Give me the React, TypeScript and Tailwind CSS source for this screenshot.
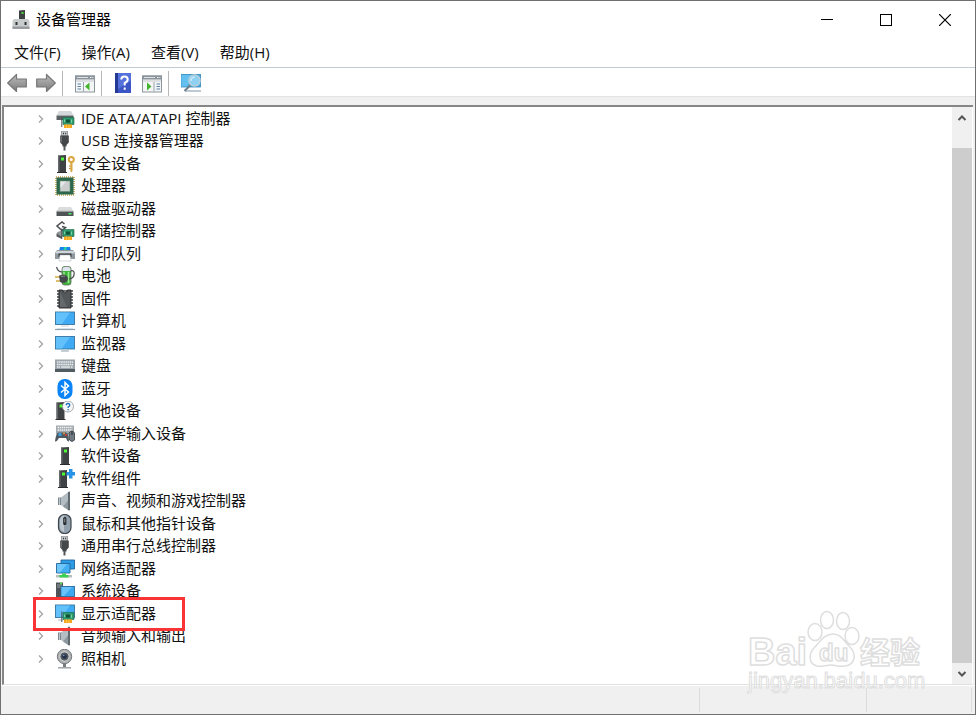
import type { ReactNode } from 'react'

const Svg = ({ children, size = 'size-5' }: { children: ReactNode; size?: string }) => (
  <svg viewBox="0 0 20 20" className={`${size} shrink-0`} aria-hidden="true">
    {children}
  </svg>
)

const Card = () => (
  <>
    <path d="M8 8.500H19V15.500H8Z" fill="#2f9a6c" stroke="#17694a" strokeWidth=".6" />
    <path d="M6.800 7.500V18" stroke="#4b5557" strokeWidth="1" />
    <rect x="11" y="10.500" width="4" height="3.200" fill="#12543a" />
    <path d="M16.500 10.500V14M9.500 10.500V13" stroke="#8edcb4" strokeWidth=".8" />
    <rect x="9" y="15.500" width="8" height="3.500" fill="#f5a81c" />
    <path d="M11.500 15.500V19M14 15.500V19" stroke="#ffd36b" strokeWidth=".6" />
  </>
)

const Tower = ({ x = 0 }: { x?: number }) => (
  <g transform={`translate(${x} 0)`}>
    <path d="M3 1.500L11 1V18H3Z" fill="#3f4244" />
    <path d="M3 1.500L4.500 1.400V18H3Z" fill="#66696b" />
    <path d="M2 18H12V19H2Z" fill="#2b2d2e" />
    <rect x="6" y="3.500" width="3" height="3" fill="#4ffa36" />
  </g>
)

const UsbPlug = () => (
  <>
    <path d="M6.500 0H12.500V5H6.500Z" fill="#c3c6c8" stroke="#7c7f81" strokeWidth=".7" />
    <path d="M8 1.800H9V3.200H8ZM10.200 1.800H11.200V3.200H10.200Z" fill="#333" />
    <path d="M5.200 4.500H13.800V11.500L11.500 14V15.500H7.500V14L5.200 11.500Z" fill="#454749" />
    <path d="M6.500 5.500V11.500" stroke="#6f7274" />
    <path d="M9.500 15V19.500" stroke="#55585a" strokeWidth="2" />
  </>
)

const Speaker = () => (
  <>
    <path d="M3 6.500H7V14H3Z" fill="#7d8990" />
    <path d="M6 6.500L14 .5V19.500L6 14Z" fill="#b4bdc3" />
    <path d="M11 12L14 8V19.500L8 15.500Z" fill="#8d979e" />
    <path d="M13 1L15 .5V19.500L13 19Z" fill="#5f6a71" />
    <path d="M4.500 6.500V14" stroke="#c0c7cb" />
  </>
)

const Screen = ({ stand }: { stand: ReactNode }) => (
  <>
    <rect x=".5" y="1" width="19" height="12.500" fill="#40abf4" stroke="#36759f" strokeWidth=".9" />
    <path d="M1 1.500H15L7 13H1Z" fill="#62c0fb" />
    {stand}
  </>
)

const devices: { name: string; icon: ReactNode; marked?: boolean }[] = [
  {
    name: 'IDE ATA/ATAPI 控制器',
    icon: (
      <>
        <path d="M4 2H16L18.500 6.500H1.500Z" fill="#d5d8da" />
        <path d="M1.500 6.500H18.500V11H1.500Z" fill="#5d6264" />
        <Card />
      </>
    ),
  },
  { name: 'USB 连接器管理器', icon: <UsbPlug /> },
  {
    name: '安全设备',
    icon: (
      <>
        <Tower />
        <circle cx="16.300" cy="5.500" r="2.500" fill="none" stroke="#dba540" strokeWidth="2" />
        <path d="M15.300 8H17.500V17L16.300 18.500L15.300 17Z" fill="#dba540" />
        <path d="M14 12H15.500M14 14.500H15.500" stroke="#b8832b" strokeWidth="1.200" />
      </>
    ),
  },
  {
    name: '处理器',
    icon: (
      <>
        <rect x="1" y="1" width="18" height="18" fill="none" stroke="#c69c44" strokeWidth="1.600" strokeDasharray="1 1" />
        <rect x="1.500" y="1.500" width="17" height="17" fill="#2d674b" />
        <rect x="5" y="5" width="10" height="10.500" fill="#cbcecc" stroke="#5f8f78" strokeWidth=".6" />
        <path d="M5.500 5.500H11L5.500 12Z" fill="#e6e8e7" />
      </>
    ),
  },
  {
    name: '磁盘驱动器',
    icon: (
      <>
        <path d="M4 8H16L18.500 12.500H1.500Z" fill="#d9dbdc" />
        <path d="M1.500 12.500H18.500V17H1.500Z" fill="#4e5355" />
        <path d="M1.500 12.300H18.500" stroke="#96999b" strokeWidth=".8" />
        <rect x="13.500" y="14" width="3" height="1.500" fill="#48ef70" />
      </>
    ),
  },
  {
    name: '存储控制器',
    icon: (
      <>
        <path d="M2.500 11L7 9.500L18 12V16H8L1.500 13Z" fill="#929799" />
        <path d="M1.500 12.500L7 15.500V18L1.500 15.500Z" fill="#565b5d" />
        <path d="M9.500 3L7 1L2 5L7 9.500L10.500 6.500L7 5.500" fill="none" stroke="#494c4e" strokeWidth="1.500" />
        <Card />
      </>
    ),
  },
  {
    name: '打印队列',
    icon: (
      <>
        <path d="M5 3H15L16 7H4Z" fill="#1585e8" />
        <path d="M9.500 3H12L11 6H8.500Z" fill="#27d3a1" />
        <path d="M2 6H18L20 9V15H0V9Z" fill="#8f989e" />
        <path d="M1.500 7H18.500L19.500 9.500H.5Z" fill="#cfd4d8" />
        <path d="M3.500 9.500H16.500V13H3.500Z" fill="#34393c" />
        <path d="M5 11H15L16 17H4Z" fill="#fff" stroke="#bac0c4" strokeWidth=".6" />
      </>
    ),
  },
  {
    name: '电池',
    icon: (
      <>
        <rect x="7" y=".5" width="9" height="18.500" rx="2.500" fill="#3db63a" stroke="#636866" strokeWidth=".8" />
        <path d="M7.500 3Q7.500 .8 11.500 .8T15.500 3V5H7.500Z" fill="#e0e4ee" />
        <path d="M9 6V9M13.500 6V17" stroke="#9ce88e" strokeWidth="1.500" />
        <path d="M1.500 1Q3 6 7 6M14 13Q20 12 19 6Q18 4 15.500 5" fill="none" stroke="#4a4d4f" strokeWidth="1.200" />
        <path d="M0 11H5M1 15H6" stroke="#d4aa42" strokeWidth="1.500" />
        <path d="M4 9.500L9 8.500Q13 9.500 13 13Q12 17 8 17L5 16Z" fill="#444749" />
        <path d="M6 10.500L10 10" stroke="#888" />
      </>
    ),
  },
  {
    name: '固件',
    icon: (
      <>
        <path d="M2 2H18M2 5H18M2 8H18M2 11H18M2 14H18M2 17H18" stroke="#424547" strokeWidth="1.500" />
        <path d="M4 1H7.500Q8.500 4 10 4T12.500 1H16V19H4Z" fill="#55585a" stroke="#222527" strokeWidth=".9" />
        <path d="M5 3L12 18H5Z" fill="#66696b" />
      </>
    ),
  },
  {
    name: '计算机',
    icon: (
      <Screen
        stand={
          <>
            <path d="M6 15H14" stroke="#cfd6db" />
            <path d="M0 18.500H20" stroke="#8ca2b3" strokeWidth="1.200" />
            <path d="M2 17.500H18" stroke="#d6e0e7" />
          </>
        }
      />
    ),
  },
  {
    name: '监视器',
    icon: (
      <g transform="translate(0 1.500)">
        <Screen
          stand={
            <>
              <path d="M8 14H12V15H8Z" fill="#cbd2d7" />
              <path d="M6 15.500H14" stroke="#92a3af" />
            </>
          }
        />
      </g>
    ),
  },
  {
    name: '键盘',
    icon: (
      <>
        <rect x="0" y="3.500" width="20" height="12" fill="#9ca5ab" />
        <path d="M2 6H18M2 8.500H18M2 11H5M16 11H18" stroke="#eef1f3" strokeWidth="1.300" strokeDasharray="1.500 .6" />
        <path d="M6 11H15" stroke="#eef1f3" strokeWidth="1.300" />
        <path d="M0 13H20V16H0Z" fill="#515b62" />
      </>
    ),
  },
  {
    name: '蓝牙',
    icon: (
      <>
        <rect x="2.500" y="0" width="15" height="20" rx="7" fill="#0a84f7" />
        <path d="M6 6.500L13.500 13L10 16.500V3.500L13.500 7L6 13.500" fill="none" stroke="#fff" strokeWidth="1.500" />
      </>
    ),
  },
  {
    name: '其他设备',
    icon: (
      <>
        <g transform="translate(-1.500 0)">
          <Tower />
        </g>
        <circle cx="13" cy="5.500" r="5.500" fill="#f5f7f8" stroke="#9ba0a3" strokeWidth=".9" />
        <path d="M11.200 4.200Q11.200 2.500 13 2.500T14.800 4.200Q14.800 5.200 13.200 6V7M13.200 8V9.200" fill="none" stroke="#1b70ba" strokeWidth="1.300" />
      </>
    ),
  },
  {
    name: '人体学输入设备',
    icon: (
      <>
        <rect x="1" y="1.500" width="18" height="9" fill="#a2a9ae" />
        <path d="M2.500 3.500H17.500M2.500 6H17.500" stroke="#eef1f3" strokeWidth="1.300" strokeDasharray="1.500 .6" />
        <path d="M0 17Q1 9 3.500 8.500H11Q14 9 14 17Q13 19 11 14H4Q1 19 0 17Z" fill="#4e5961" />
        <circle cx="5" cy="10.500" r="1.700" fill="#399ee9" />
        <circle cx="9" cy="9.500" r="1" fill="#f09a2f" />
        <circle cx="11" cy="11" r="1" fill="#de3c36" />
        <path d="M14 9Q17 5 19.500 9V16Q17 19 14.500 16Z" fill="#707a82" stroke="#343c42" strokeWidth=".8" />
        <path d="M17 7.500V11" stroke="#202527" />
      </>
    ),
  },
  { name: '软件设备', icon: <Tower x={3} /> },
  {
    name: '软件组件',
    icon: (
      <>
        <Tower x={1} />
        <path d="M14 0H17.500V3H20V6.500H17.500V9.500H14V6.500H11.500V3H14Z" fill="#2793e4" />
      </>
    ),
  },
  { name: '声音、视频和游戏控制器', icon: <Speaker /> },
  {
    name: '鼠标和其他指针设备',
    icon: (
      <>
        <rect x="3.500" y=".5" width="12.500" height="19" rx="6" fill="#93a1ae" stroke="#3e464c" strokeWidth="1.200" />
        <path d="M5 6Q6 1.500 9 1.500V18Q5 17 5 12Z" fill="#bbc6cf" />
        <rect x="8.200" y="3" width="3.200" height="8" rx="1.500" fill="#24282b" />
        <path d="M9.800 4.500V8.500" stroke="#919699" />
      </>
    ),
  },
  { name: '通用串行总线控制器', icon: <UsbPlug /> },
  {
    name: '网络适配器',
    icon: (
      <>
        <path d="M6 1H19.500V10H6Z" fill="#2e9be5" stroke="#23679b" strokeWidth=".9" />
        <path d="M1.500 4.500H15V14H1.500Z" fill="#42aef3" stroke="#23679b" strokeWidth=".9" />
        <path d="M2 5H12L5 13.500H2Z" fill="#70c8fa" />
        <path d="M7 14.500H11V16H17V18.500H1V16H7Z" fill="#b8c0bb" />
        <path d="M7 14.500H11V16H13.500V18.500H4.500V16H7Z" fill="#3dcf54" />
      </>
    ),
  },
  {
    name: '系统设备',
    icon: (
      <>
        <path d="M1 1.500H8V16H1Z" fill="#4e5457" />
        <path d="M2 4H7M2 6H7" stroke="#aab0b3" strokeWidth=".8" />
        <rect x="5" y="1.800" width="2" height="1.500" fill="#4fe34c" />
        <rect x="6" y="5.500" width="13.500" height="10" fill="#3da8f0" stroke="#286b9e" strokeWidth=".9" />
        <path d="M6.500 6H17L9 15H6.500Z" fill="#69c3f9" />
      </>
    ),
  },
  {
    name: '显示适配器',
    marked: true,
    icon: (
      <>
        <Screen stand={<path d="M3 16H8" stroke="#a9b4bc" />} />
        <Card />
      </>
    ),
  },
  { name: '音频输入和输出', icon: <Speaker /> },
  {
    name: '照相机',
    icon: (
      <>
        <path d="M8 14H11V18H8Z" fill="#777c7e" />
        <path d="M3 18.800H16" stroke="#9a9ea0" strokeWidth="1.400" />
        <circle cx="9.500" cy="7.500" r="7.200" fill="#aeb1b3" stroke="#74787a" strokeWidth="1" />
        <circle cx="9.500" cy="7.500" r="4.600" fill="#55595c" stroke="#e0e2e3" strokeWidth=".9" />
        <circle cx="9.500" cy="7.500" r="2.300" fill="#222f4b" />
        <circle cx="8.800" cy="6.500" r=".8" fill="#78a3dc" />
      </>
    ),
  },
]

const menus = ['文件(F)', '操作(A)', '查看(V)', '帮助(H)']

const Arrow = ({ flip = false }: { flip?: boolean }) => (
  <Svg>
    <defs>
      <linearGradient id="arrowFill" x1="0" y1="0" x2="0" y2="1">
        <stop offset="0" stopColor="#bdbdbd" />
        <stop offset="1" stopColor="#7b7b7b" />
      </linearGradient>
    </defs>
    <path
      d="M.7 10L9.500 1.500V6H19.300V14H9.500V18.500Z"
      transform={flip ? 'translate(20 0) scale(-1 1)' : undefined}
      fill="url(#arrowFill)"
      stroke="#777"
      strokeWidth="1.200"
      strokeLinejoin="round"
    />
  </Svg>
)

const PaneWindow = ({ side }: { side: 'left' | 'right' }) => (
  <Svg>
    <rect x=".5" y="3" width="19" height="16" fill="#f4f5f6" stroke="#8d959c" />
    <path d="M0 2.500H20V6.500H0Z" fill="#8b949c" />
    <path d="M2 4.500H13" stroke="#dfe3e6" />
    <path d="M15 4.500H18.500" stroke="#fff" strokeDasharray="1 .6" />
    <path d="M1 8H19" stroke="#c5cacf" />
    {side === 'left' ? (
      <>
        <path d="M8.500 9V18.500" stroke="#99a1a8" />
        <path d="M2.500 11H6M2.500 13.500H6M2.500 16H6" stroke="#5b82a3" strokeWidth="1.200" />
        <path d="M14.500 9.500V17.500L10 13.500Z" fill="#42b52c" />
      </>
    ) : (
      <>
        <path d="M12 9V18.500" stroke="#99a1a8" />
        <path d="M14.500 11H18M14.500 13.500H18M14.500 16H18" stroke="#5b82a3" strokeWidth="1.200" />
        <path d="M5 9.500V17.500L9.500 13.500Z" fill="#42b52c" />
      </>
    )}
  </Svg>
)

const Separator = () => <span className="ml-1.5 mr-3 h-[25px] w-px bg-[#b5b8ba]" />

function TitleBar() {
  return (
    <header className="flex h-[38px] items-stretch pr-px">
      <div className="flex flex-1 items-center gap-[5px] pl-[10px]">
        <Svg>
          <path d="M8 .5L14 0V9H8Z" fill="#3d4142" />
          <rect x="10.500" y="2" width="2" height="2" fill="#4cdb3e" />
          <path d="M3 9H17L18.500 11V18.500H1.500V11Z" fill="#c9cccd" />
          <path d="M1.500 16.500H18.500V19H1.500Z" fill="#999c9e" />
          <path d="M4.500 12H6.500V15H4.500ZM13.500 12H15.500V15H13.500Z" fill="#303334" />
        </Svg>
        <h1 className="pb-0.5 text-[15px] text-black">设备管理器</h1>
      </div>
      <button aria-label="最小化" className="flex w-[59px] items-center justify-center">
        <svg className="size-3" viewBox="0 0 12 12" shapeRendering="crispEdges"><path d="M0 5.500H12" stroke="#000" /></svg>
      </button>
      <button aria-label="最大化" className="flex w-[59px] items-center justify-center">
        <svg className="size-3" viewBox="0 0 12 12"><rect x=".5" y=".5" width="11" height="11" fill="none" stroke="#000" /></svg>
      </button>
      <button aria-label="关闭" className="flex w-[59px] items-center justify-center">
        <svg className="size-3" viewBox="0 0 12 12"><path d="M0 0L12 12M12 0L0 12" stroke="#000" strokeWidth="1.200" /></svg>
      </button>
    </header>
  )
}

function Toolbar() {
  return (
    <div role="toolbar" className="box-content flex h-[26px] items-center border-b border-[#e3e3e3] pl-1.5 pt-0.5">
      <div className="flex gap-[9px]">
        <button aria-label="后退"><Arrow /></button>
        <button aria-label="前进"><Arrow flip /></button>
      </div>
      <Separator />
      <button aria-label="显示/隐藏控制台树"><PaneWindow side="left" /></button>
      <Separator />
      <div className="flex gap-2">
        <button aria-label="帮助">
          <Svg>
            <rect x="1" y="0" width="16" height="20" fill="#3c55c4" />
            <path d="M1 0H4V20H1Z" fill="#243993" />
            <path d="M4 0H17V8L4 16Z" fill="#5470da" />
            <path d="M7.300 6.500Q7.300 3.500 10.500 3.500T13.700 6.500Q13.700 8.500 10.700 10V12.500M10.700 14.500V16.800" fill="none" stroke="#fff" strokeWidth="2" />
          </Svg>
        </button>
        <button aria-label="操作窗格"><PaneWindow side="right" /></button>
      </div>
      <Separator />
      <button aria-label="扫描检测硬件改动">
        <Svg>
          <rect x="0" y="1.500" width="19.500" height="12.500" fill="#43a9e2" stroke="#3285b9" strokeWidth=".8" />
          <path d="M.5 2H13L6 13.500H.5Z" fill="#64c1ef" />
          <path d="M4 18H20" stroke="#91a7b6" strokeWidth="1.200" />
          <path d="M9.500 12L3.500 18" stroke="#71828e" strokeWidth="2.200" />
          <circle cx="13.500" cy="7.500" r="5.600" fill="#8ed1f3" stroke="#c0d0da" strokeWidth="1.300" />
          <path d="M10 8Q10 4 14 4" fill="none" stroke="#d5f0fc" strokeWidth="1.200" />
        </Svg>
      </button>
    </div>
  )
}

function DeviceTree() {
  return (
    <ul className="flex-1">
      {devices.map((device) => (
        <li key={device.name} className="relative flex items-center pl-8 odd:h-[23px] even:h-[22px]">
          <button aria-label={`展开 ${device.name}`} className="flex w-[10px] justify-center">
            <svg viewBox="0 0 6 10" className="h-[10px] w-1.5"><path d="M1 1.500L4.500 5L1 8.500" fill="none" stroke="#a3a3a3" strokeWidth="1.300" /></svg>
          </button>
          <span className="ml-[9px] mr-1.5"><Svg>{device.icon}</Svg></span>
          <span className="whitespace-nowrap pb-0.5">{device.name}</span>
          {device.marked && (
            <span className="pointer-events-none absolute -bottom-1.5 -top-[5px] left-[29px] z-10 w-[152px] border-3 border-[#fa3434]" />
          )}
        </li>
      ))}
    </ul>
  )
}

function Scrollbar() {
  return (
    <div className="flex w-5 flex-col bg-[#f0f0f0]">
      <button aria-label="向上滚动" className="flex h-[21px] items-center justify-center">
        <svg viewBox="0 0 10 8" className="h-2 w-[10px]"><path d="M1.500 6L5 2.500L8.500 6" fill="none" stroke="#555" strokeWidth="2" /></svg>
      </button>
      <div className="mt-5 flex-1 bg-[#cdcdcd]" />
      <button aria-label="向下滚动" className="flex h-[21px] items-center justify-center">
        <svg viewBox="0 0 10 8" className="h-2 w-[10px]"><path d="M1.500 2L5 5.500L8.500 2" fill="none" stroke="#555" strokeWidth="2" /></svg>
      </button>
    </div>
  )
}

function Watermark() {
  return (
    <svg
      viewBox="0 0 184 86"
      className="pointer-events-none absolute bottom-[18px] right-[48px] h-[86px] w-[184px]"
      fill="#fff"
      fillOpacity=".75"
      stroke="#dedede"
      strokeWidth="1.500"
      strokeLinejoin="round"
      fontFamily='"Liberation Sans", "Noto Sans CJK SC", sans-serif'
    >
      <ellipse cx="72" cy="22" rx="7" ry="8.500" />
      <ellipse cx="84" cy="10" rx="6.500" ry="8.500" />
      <ellipse cx="100" cy="11" rx="6.500" ry="8.500" />
      <ellipse cx="109" cy="26" rx="7" ry="8.500" />
      <path d="M90 24C98 24 101 31 107 37C114 44 112 55 102 56C96 57 93 55 88 55C83 55 79 57 74 56C66 54 65 45 71 38C77 32 81 24 90 24Z" />
      <text x="5" y="55" fontSize="38" fontWeight="700">Bai</text>
      <text x="76" y="51" fontSize="24" fontWeight="700">du</text>
      <text x="117" y="53" fontSize="30" fontWeight="700">经验</text>
      <text x="5" y="78" fontSize="22" strokeWidth="1">jingyan.baidu.com</text>
    </svg>
  )
}

export default function App() {
  return (
    <div className='relative flex min-h-screen flex-col border border-[#707070] bg-white font-["Open_Sans","Noto_Sans_CJK_SC",sans-serif] text-[15px] leading-5 text-[#111]'>
      <TitleBar />
      <nav className="flex h-7 items-center gap-[21px] pb-0.5 pl-[13px]">
        {menus.map((menu) => (
          <button key={menu}>{menu}</button>
        ))}
      </nav>
      <div className="border-t border-[#c3cbd1]">
        <Toolbar />
      </div>
      <main className="flex flex-1 flex-col bg-[#f0f0f0] pl-px pr-0.5 pt-2">
        <div className="flex flex-1 border-b border-l-2 border-t-2 border-b-[#e0e0e0] border-l-[#868686] border-t-[#868686] bg-white pr-px">
          <DeviceTree />
          <Scrollbar />
        </div>
      </main>
      <footer className="flex h-[29px] justify-end border-t border-white bg-[#f0f0f0] pr-[3px]">
        <span className="my-0.5 w-[167px] border-l border-[#dcdcdc]" />
        <span className="my-0.5 w-[106px] border-x border-[#dcdcdc]" />
      </footer>
      <Watermark />
    </div>
  )
}
